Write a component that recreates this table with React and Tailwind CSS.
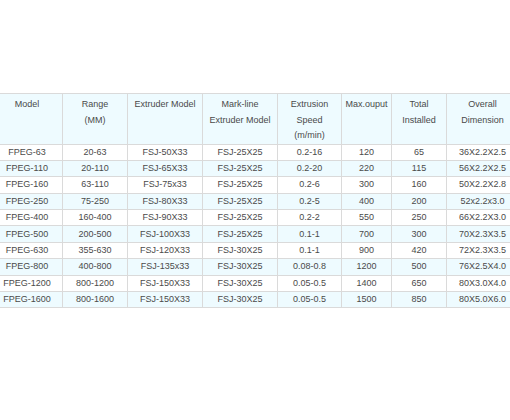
import React from "react";

const rows = [
  ["FPEG-63", "20-63", "FSJ-50X33", "FSJ-25X25", "0.2-16", "120", "65", "36X2.2X2.5"],
  ["FPEG-110", "20-110", "FSJ-65X33", "FSJ-25X25", "0.2-20", "220", "115", "56X2.2X2.5"],
  ["FPEG-160", "63-110", "FSJ-75x33", "FSJ-25X25", "0.2-6", "300", "160", "50X2.2X2.8"],
  ["FPEG-250", "75-250", "FSJ-80X33", "FSJ-25X25", "0.2-5", "400", "200", "52x2.2x3.0"],
  ["FPEG-400", "160-400", "FSJ-90X33", "FSJ-25X25", "0.2-2", "550", "250", "66X2.2X3.0"],
  ["FPEG-500", "200-500", "FSJ-100X33", "FSJ-25X25", "0.1-1", "700", "300", "70X2.3X3.5"],
  ["FPEG-630", "355-630", "FSJ-120X33", "FSJ-30X25", "0.1-1", "900", "420", "72X2.3X3.5"],
  ["FPEG-800", "400-800", "FSJ-135x33", "FSJ-30X25", "0.08-0.8", "1200", "500", "76X2.5X4.0"],
  ["FPEG-1200", "800-1200", "FSJ-150X33", "FSJ-30X25", "0.05-0.5", "1400", "650", "80X3.0X4.0"],
  ["FPEG-1600", "800-1600", "FSJ-150X33", "FSJ-30X25", "0.05-0.5", "1500", "850", "80X5.0X6.0"],
];

const headers = [
  ["Model"],
  ["Range", "(MM)"],
  ["Extruder Model"],
  ["Mark-line", "Extruder Model"],
  ["Extrusion", "Speed", "(m/min)"],
  ["Max.ouput"],
  ["Total", "Installed"],
  ["Overall", "Dimension"],
];

const widths = ["w-[71px]", "w-[65px]", "w-[75px]", "w-[75px]", "w-[64px]", "w-[50px]", "w-[55px]", "w-[72px]"];

export default function App() {
  return (
    <div className="w-[510px] h-[420px] bg-white overflow-hidden pt-[93px]" style={{ fontFamily: '"Liberation Sans", Arial, sans-serif' }}>
      <table className="ml-[-9px] w-[527px] border-collapse table-fixed text-[9px] text-[#4a4a4a]">
        <colgroup>
          {widths.map((w, i) => (
            <col key={i} className={w} />
          ))}
        </colgroup>
        <thead>
          <tr className="bg-[#eefbff]">
            {headers.map((h, i) => (
              <th key={i} className="h-[50px] border border-[#dadada] align-top pt-[3px] px-0 font-normal text-center leading-[15.5px]">
                {h.map((l, j) => (
                  <div key={j}>{l}</div>
                ))}
              </th>
            ))}
          </tr>
        </thead>
        <tbody>
          {rows.map((r, i) => (
            <tr key={i} className={i % 2 === 1 ? "bg-[#eefbff]" : "bg-white"}>
              {r.map((c, j) => (
                <td key={j} className="h-[16.4px] p-0 border border-[#dadada] text-center leading-[15px]">
                  {c}
                </td>
              ))}
            </tr>
          ))}
        </tbody>
      </table>
    </div>
  );
}
